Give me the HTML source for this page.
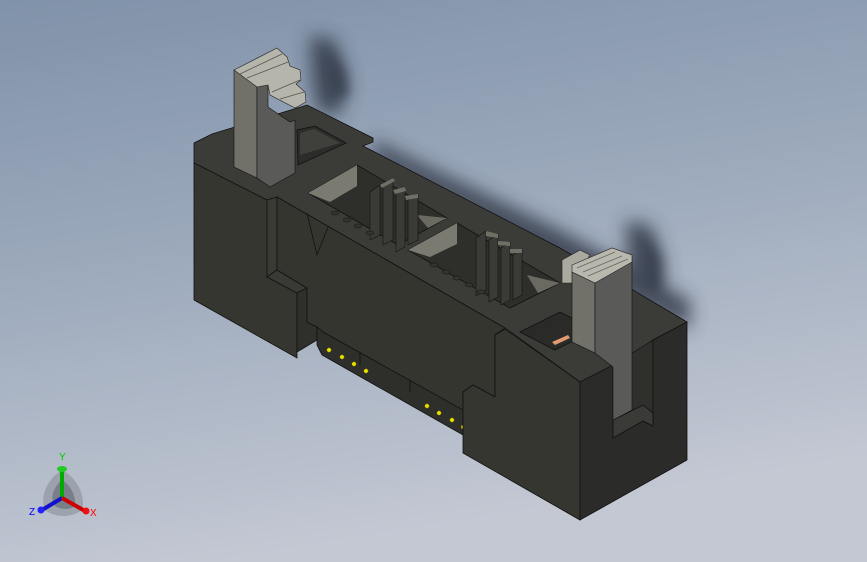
<!DOCTYPE html>
<html><head><style>
html,body{margin:0;padding:0;width:867px;height:562px;overflow:hidden}
svg{display:block}
</style></head><body>
<svg width="867" height="562" viewBox="0 0 867 562" xmlns="http://www.w3.org/2000/svg">
<defs>
<linearGradient id="bg" x1="0" y1="0" x2="0.25" y2="1">
<stop offset="0" stop-color="#8092a9"/>
<stop offset="0.5" stop-color="#9eabbd"/>
<stop offset="1" stop-color="#c3c8d3"/>
</linearGradient>
<filter id="bl" x="-50%" y="-50%" width="200%" height="200%"><feGaussianBlur stdDeviation="9"/></filter>
<filter id="bl2" x="-50%" y="-50%" width="200%" height="200%"><feGaussianBlur stdDeviation="5"/></filter>
</defs>
<rect width="867" height="562" fill="url(#bg)"/>
<g fill="#2c3340" opacity="0.8" filter="url(#bl)">
<path d="M310 35 L335 40 L348 80 L340 115 L318 112 L312 80 Z"/>
<path d="M373 140 L560 230 L690 300 L690 330 L560 265 L373 160 Z"/>
<path d="M625 220 L652 226 L665 265 L660 305 L635 302 L628 260 Z"/>
</g>
<g fill="#2c3340" opacity="0.5" filter="url(#bl2)">
<path d="M330 50 L345 70 L350 95 L335 100 Z"/>
<path d="M645 235 L660 255 L662 290 L648 290 Z"/>
</g>
<polygon fill="#3b3b38" stroke="#111" stroke-width="0.8" points="194,143 212,134 307,105 373,138 373,142 363,146 560,248 633,290 687,322 653,340 613,367 580,382 505,328 277,197 267,200 194,163"/>
<polygon fill="#363630" stroke="#111" stroke-width="0.8" points="194,163 267,200 267,277 297,293 297,358 194,300"/>
<polygon fill="#3a3a35" stroke="#111" stroke-width="0.8" points="267,200 277,197 277,270 267,277"/>
<polygon fill="#3a3a35" stroke="#111" stroke-width="0.8" points="267,277 277,270 307,288 297,293"/>
<polygon fill="#2f2f2b" stroke="#111" stroke-width="0.8" points="297,293 307,288 307,322 317,327 317,340 297,352"/>
<polygon fill="#2e2e2a" stroke="#111" stroke-width="0.8" points="317,327 463,407 463,435 322,355 317,345"/>
<g fill="none" stroke="#111" stroke-width="0.8">
<path d="M323 312 L323 330 L360 350 L360 365"/>
<path d="M371 338 L371 356 L410 377 L410 392"/>
<path d="M421 365 L421 383 L458 403"/>
</g>
<polygon fill="#35352f" stroke="#111" stroke-width="0.8" points="277,197 505,328 495,335 495,397 473,385 463,392 463,410 323,332 317,327 307,322 307,288 277,270"/>
<polyline fill="none" stroke="#111" stroke-width="0.8" points="307,213 317,255 328,227"/>
<g fill="#e8e000" stroke="#6a6200" stroke-width="0.5">
<circle cx="329" cy="350" r="2.2"/><circle cx="342" cy="357" r="2.2"/><circle cx="354" cy="364" r="2.2"/><circle cx="366" cy="371" r="2.2"/>
<circle cx="427" cy="406" r="2.2"/><circle cx="439" cy="413" r="2.2"/><circle cx="452" cy="420" r="2.2"/><circle cx="463" cy="427" r="2"/>
</g>
<polygon fill="#363630" stroke="#111" stroke-width="0.8" points="463,392 473,385 495,397 495,335 505,329 580,382 580,520 463,453"/>
<polygon fill="#2f2f2c" stroke="#111" stroke-width="0.6" points="613,365 653,340 653,413 643,408 613,420"/>
<polygon fill="#2b2b2a" stroke="#111" stroke-width="0.8" points="580,382 613,365 613,438 643,421 653,426 653,340 687,322 687,460 580,520"/>
<polygon fill="#3a3a36" stroke="#111" stroke-width="0.8" points="613,420 643,405 653,413 653,426 643,421 613,438"/>
<polygon fill="#2a2a28" stroke="#111" stroke-width="0.8" points="520,332 560,312 595,330 555,350"/>
<polygon fill="#e09a70" points="552,342 568,335 570,338 555,345"/>
<polygon fill="#2c2c2a" stroke="#111" stroke-width="0.8" points="297,130 315,126 346,143 298,165"/>
<polygon fill="#3f3f3b" points="300,133 314,129 340,143 300,155"/>
<polygon fill="#2c2c2a" stroke="#111" stroke-width="0.8" points="240,150 262,142 290,160 268,172"/>
<polygon fill="#2e2e2b" stroke="#111" stroke-width="0.8" points="308,193 357,165 447,218 398,245"/>
<polygon fill="#7a7a71" points="308,193 357,165 357,186 330,202"/>
<polygon fill="#6a6a62" points="417,215 447,218 428,228"/>
<polygon fill="#2e2e2b" stroke="#111" stroke-width="0.8" points="408,250 457,223 560,283 510,308"/>
<polygon fill="#7a7a71" points="408,250 457,223 457,244 430,257"/>
<polygon fill="#6a6a62" points="527,275 560,283 538,293"/>
<g fill="#3a3a36" stroke="#111" stroke-width="0.6">
<polygon points="370,192 380,185 380,235 370,240"/>
<polygon points="383,185 393,178 393,240 383,245"/>
<polygon points="396,193 405,187 405,247 396,252"/>
<polygon points="408,200 418,194 418,240 408,245"/>
<polygon points="476,238 486,231 486,290 476,296"/>
<polygon points="489,240 498,234 498,297 489,302"/>
<polygon points="501,248 510,242 510,300 501,305"/>
<polygon points="513,255 522,249 522,295 513,300"/>
</g>
<g fill="#6f6f66"><polygon points="380,185 393,178 395,181 382,188"/><polygon points="393,190 405,187 406,191 395,194"/><polygon points="405,196 418,194 418,198 406,200"/><polygon points="486,231 498,234 498,238 486,236"/><polygon points="498,241 510,242 510,246 498,245"/><polygon points="510,249 522,249 522,253 510,253"/></g>
<g fill="#34342f" stroke="#111" stroke-width="0.5">
<ellipse cx="335" cy="213" rx="4" ry="2"/><ellipse cx="347" cy="220" rx="4" ry="2"/><ellipse cx="358" cy="226" rx="4" ry="2"/><ellipse cx="370" cy="233" rx="4" ry="2"/>
<ellipse cx="434" cy="265" rx="4" ry="2"/><ellipse cx="446" cy="272" rx="4" ry="2"/><ellipse cx="457" cy="278" rx="4" ry="2"/><ellipse cx="469" cy="285" rx="4" ry="2"/><ellipse cx="481" cy="292" rx="4" ry="2"/>
</g>
<polygon fill="#71716a" stroke="#111" stroke-width="0.6" points="234,70 257,82 257,178 234,167"/>
<polygon fill="#5a5a58" stroke="#111" stroke-width="0.6" points="257,82 268,85 268,107 290,122 295,120 295,173 270,187 257,178"/>
<polygon fill="#b5b5ab" stroke="#222" stroke-width="0.6" points="234,70 277,48 287,57 290,66 300,70 301,80 296,84 305,92 306,102 295,108 270,95 268,85 257,87"/>
<g stroke="#55554f" stroke-width="0.8" fill="none"><path d="M240 74 L282 54"/><path d="M247 78 L288 62"/><path d="M272 92 L300 80"/><path d="M280 99 L304 92"/></g>
<polygon fill="#a9a99f" stroke="#222" stroke-width="0.6" points="562,260 580,250 590,255 572,283 562,283"/>
<polygon fill="#71716a" stroke="#111" stroke-width="0.6" points="572,272 595,283 595,353 572,342"/>
<polygon fill="#5a5a58" stroke="#111" stroke-width="0.6" points="595,283 632,258 632,410 613,420 613,367 595,353"/>
<polygon fill="#b8b8ae" stroke="#222" stroke-width="0.6" points="572,265 612,248 632,255 632,262 595,283 572,272"/>
<g stroke="#66665e" stroke-width="0.8" fill="none"><path d="M577 268 L615 252"/><path d="M583 272 L622 256"/><path d="M588 276 L628 259"/></g>
<path d="M62 470 C45 480 40 500 45 510 C55 518 72 518 82 510 C86 498 78 478 62 470 Z" fill="#8a8f98" opacity="0.6"/>
<path d="M62 480 C52 488 50 500 55 506 C62 510 70 510 75 506 C76 498 72 486 62 480 Z" fill="#555b64" opacity="0.5"/>
<line x1="62" y1="498" x2="62" y2="468" stroke="#0a0" stroke-width="4"/>
<ellipse cx="62" cy="469" rx="5" ry="3" fill="#2c2"/>
<line x1="62" y1="498" x2="42" y2="510" stroke="#11c" stroke-width="4"/>
<circle cx="41" cy="510" r="3.5" fill="#22f"/>
<line x1="62" y1="498" x2="85" y2="511" stroke="#c00" stroke-width="4"/>
<circle cx="86" cy="511" r="3.5" fill="#e11"/>
<text x="59" y="460" font-family="Liberation Sans, sans-serif" font-size="10" fill="#0c0">Y</text>
<text x="29" y="515" font-family="Liberation Sans, sans-serif" font-size="10" fill="#00f">Z</text>
<text x="90" y="516" font-family="Liberation Sans, sans-serif" font-size="10" fill="#f00">X</text>
</svg>
</body></html>
